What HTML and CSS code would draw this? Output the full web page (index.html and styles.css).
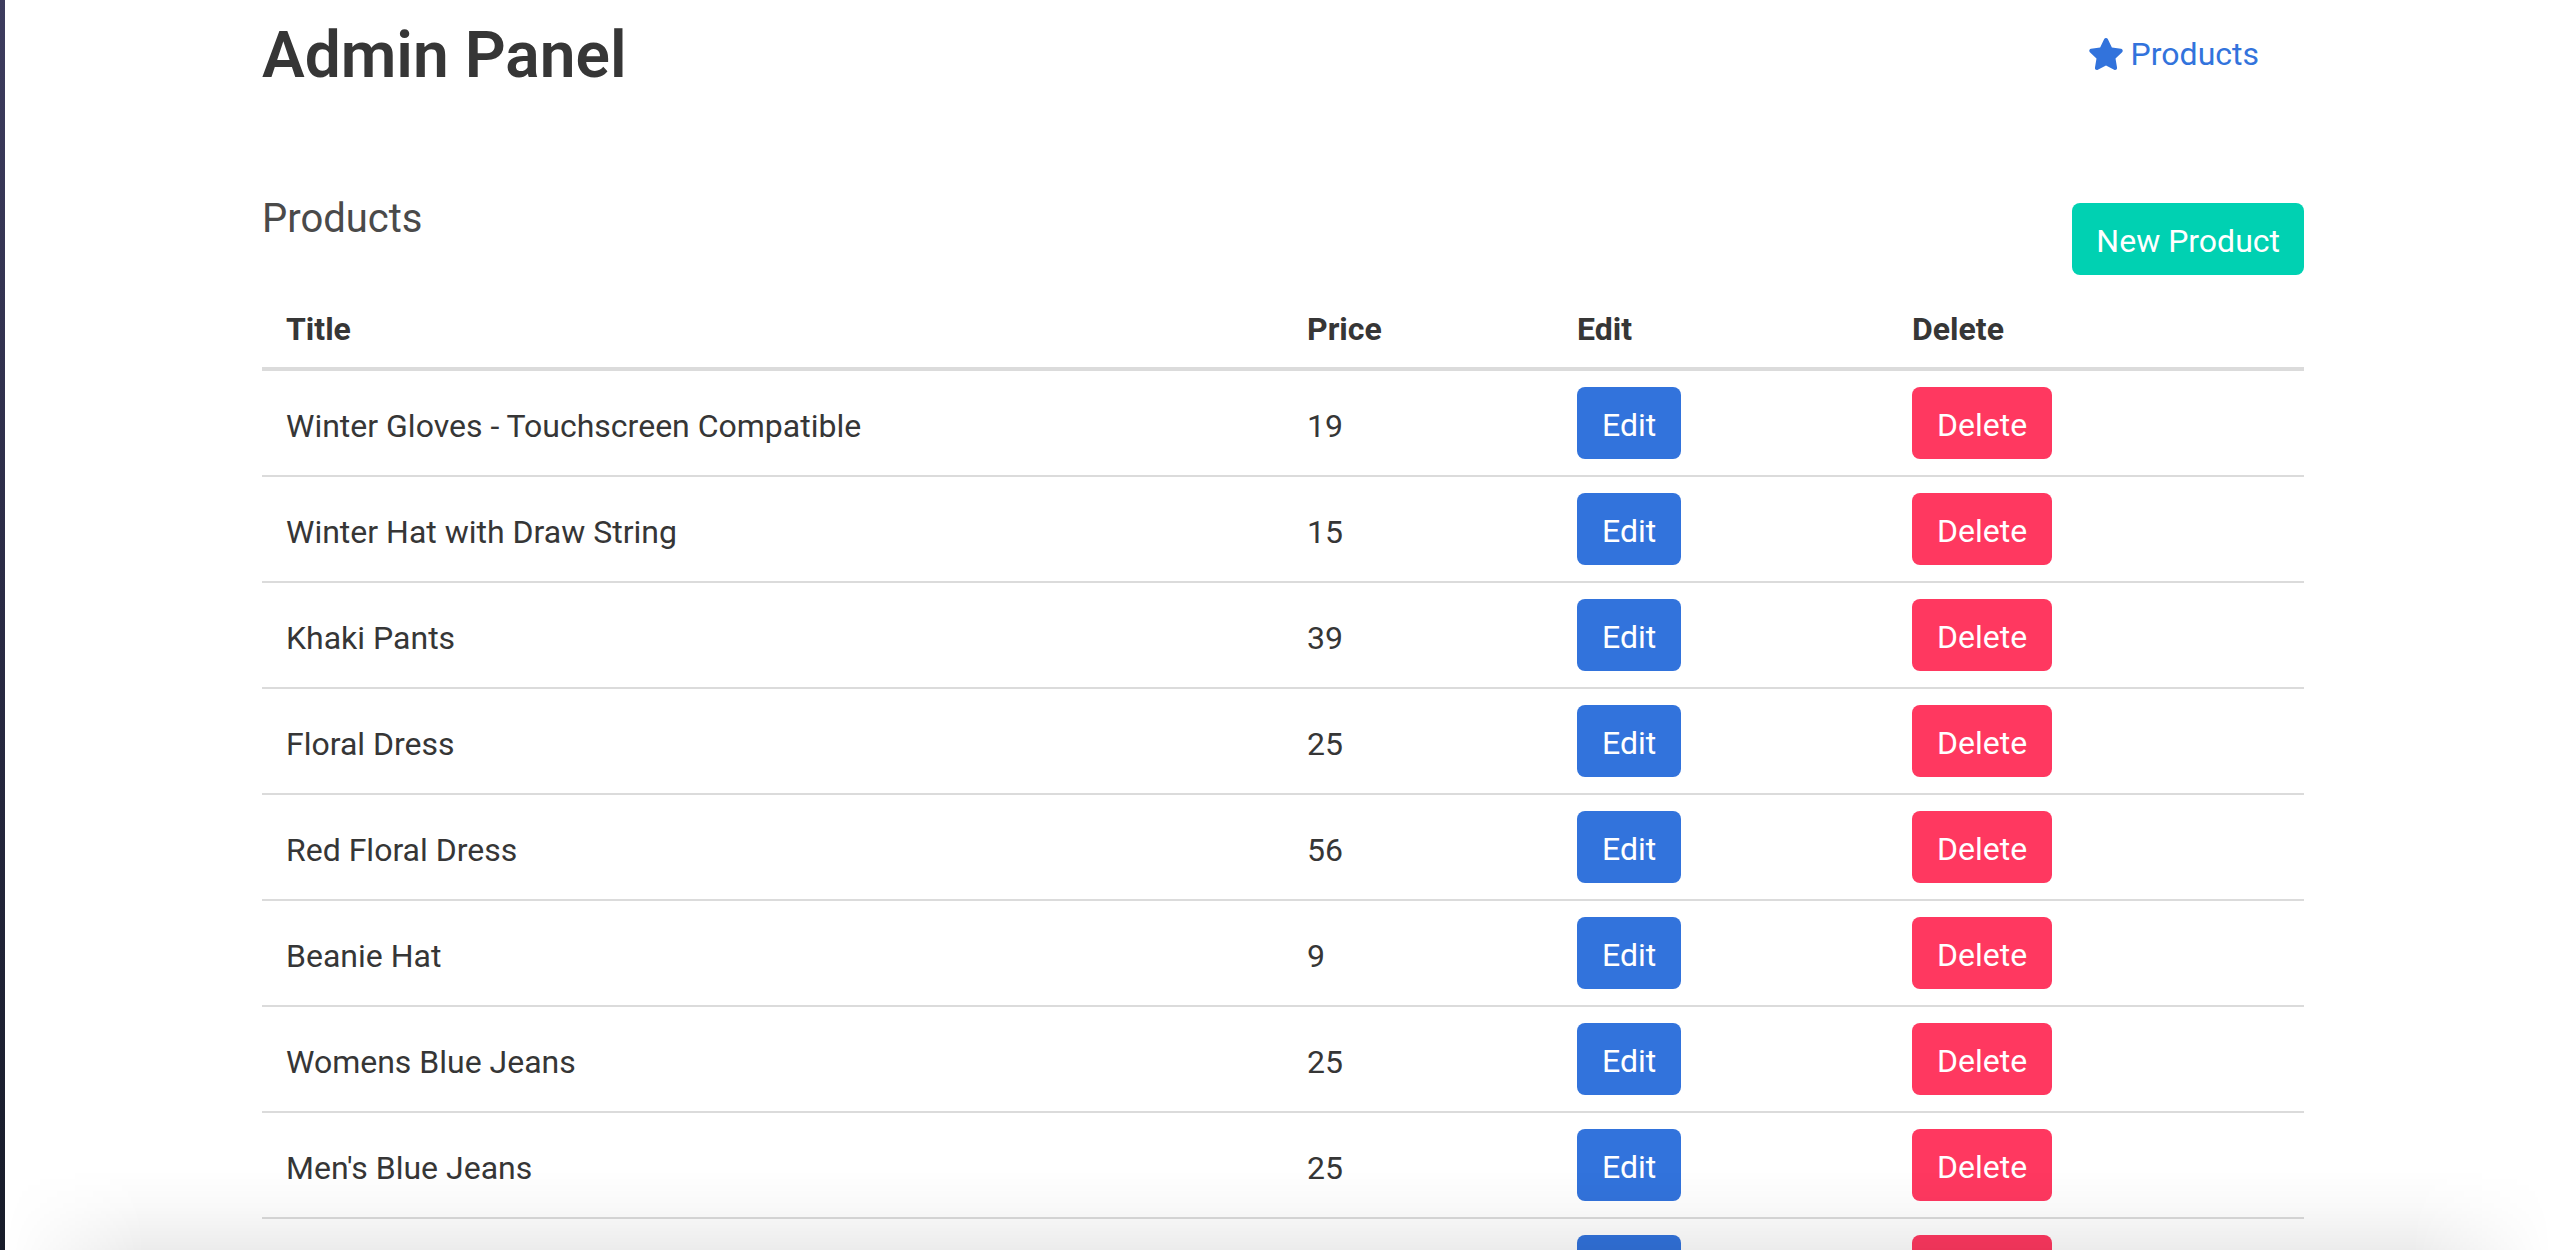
FILE: index.html
```html
<!DOCTYPE html>
<html lang="en">
<head>
<meta charset="utf-8">
<title>Admin Panel</title>
<link rel="stylesheet" href="styles.css">
</head>
<body>
<div class="desktop-edge"></div>
<div class="window">
  <div class="container">
    <header class="topbar">
      <h1 class="brand">Admin Panel</h1>
      <a class="nav-link" href="#">
        <svg class="star" viewBox="0 0 576 512" aria-hidden="true"><path d="M259.3 17.8L194 150.2 47.9 171.5c-26.2 3.8-36.7 36.1-17.7 54.6l105.7 103-25 145.5c-4.5 26.3 23.2 46 46.4 33.7L288 439.6l130.7 68.7c23.2 12.2 50.9-7.4 46.4-33.7l-25-145.5 105.7-103c19-18.5 8.5-50.8-17.7-54.6L382 150.2 316.7 17.8c-11.7-23.6-45.6-23.9-57.4 0z"/></svg>
        <span>Products</span>
      </a>
    </header>

    <div class="level">
      <h2 class="subtitle">Products</h2>
      <button class="btn btn-primary">New Product</button>
    </div>

    <table class="table">
      <thead>
        <tr>
          <th class="col-title">Title</th>
          <th class="col-price">Price</th>
          <th class="col-edit">Edit</th>
          <th class="col-delete">Delete</th>
        </tr>
      </thead>
      <tbody>
        <tr><td class="cell-text">Winter Gloves - Touchscreen Compatible</td><td class="cell-text">19</td><td><button class="btn btn-link">Edit</button></td><td><button class="btn btn-danger">Delete</button></td></tr>
        <tr><td class="cell-text">Winter Hat with Draw String</td><td class="cell-text">15</td><td><button class="btn btn-link">Edit</button></td><td><button class="btn btn-danger">Delete</button></td></tr>
        <tr><td class="cell-text">Khaki Pants</td><td class="cell-text">39</td><td><button class="btn btn-link">Edit</button></td><td><button class="btn btn-danger">Delete</button></td></tr>
        <tr><td class="cell-text">Floral Dress</td><td class="cell-text">25</td><td><button class="btn btn-link">Edit</button></td><td><button class="btn btn-danger">Delete</button></td></tr>
        <tr><td class="cell-text">Red Floral Dress</td><td class="cell-text">56</td><td><button class="btn btn-link">Edit</button></td><td><button class="btn btn-danger">Delete</button></td></tr>
        <tr><td class="cell-text">Beanie Hat</td><td class="cell-text">9</td><td><button class="btn btn-link">Edit</button></td><td><button class="btn btn-danger">Delete</button></td></tr>
        <tr><td class="cell-text">Womens Blue Jeans</td><td class="cell-text">25</td><td><button class="btn btn-link">Edit</button></td><td><button class="btn btn-danger">Delete</button></td></tr>
        <tr><td class="cell-text">Men's Blue Jeans</td><td class="cell-text">25</td><td><button class="btn btn-link">Edit</button></td><td><button class="btn btn-danger">Delete</button></td></tr>
        <tr><td class="cell-text">Wool Scarf</td><td class="cell-text">12</td><td><button class="btn btn-link">Edit</button></td><td><button class="btn btn-danger">Delete</button></td></tr>
      </tbody>
    </table>
  </div>
</div>
<div class="bottom-shade"></div>
</body>
</html>
```

FILE: styles.css
```css
html, body {
  margin: 0;
  padding: 0;
}

body {
  display: flex;
  min-height: 100vh;
  background: #ffffff;
  font-family: Roboto, Inter, "Noto Sans", "Liberation Sans", sans-serif;
  font-size: 32px;
  color: #363636;
  overflow: hidden;
}

.desktop-edge {
  flex: 0 0 5px;
  background: linear-gradient(to bottom, #3d3c5e 0%, #2a2b45 45%, #151a26 100%);
}

.window {
  flex: 1;
  background: #ffffff;
}

.container {
  width: 2042px;
  margin-left: 257px;
}

.topbar {
  display: flex;
  justify-content: space-between;
  align-items: flex-start;
  padding-top: 20px;
}

.brand {
  margin: 0;
  font-size: 64px;
  line-height: 72px;
  font-weight: 600;
  color: #363636;
}

.nav-link {
  display: flex;
  align-items: center;
  gap: 7px;
  margin-top: 10px;
  margin-right: 45px;
  line-height: 48px;
  color: #3273dc;
  text-decoration: none;
}

.star {
  width: 36px;
  height: 32px;
  fill: #3273dc;
}

.level {
  display: flex;
  justify-content: space-between;
  align-items: flex-start;
  margin-top: 102px;
}

.subtitle {
  margin: 0;
  font-size: 40px;
  line-height: 50px;
  font-weight: 400;
  color: #4a4a4a;
}

.btn {
  display: inline-flex;
  align-items: center;
  justify-content: center;
  box-sizing: border-box;
  height: 72px;
  padding: 4px 23px 0;
  border: 2px solid transparent;
  border-radius: 8px;
  font-family: inherit;
  font-size: 32px;
  line-height: 48px;
  color: #ffffff;
  cursor: pointer;
}

.level .btn {
  margin-top: 9px;
  padding-left: 22px;
  padding-right: 22px;
}

.btn-primary { background: #00d1b2; }
.btn-link { background: #3273dc; }
.btn-danger { background: #ff3860; }

.table {
  margin-top: 12px;
  width: 2042px;
  border-collapse: collapse;
  table-layout: fixed;
}

.col-title { width: 973px; }
.col-price { width: 222px; }
.col-edit { width: 287px; }
.col-delete { width: 368px; }

.table th {
  text-align: left;
  font-weight: 700;
  padding: 18px 24px 14px;
  line-height: 48px;
  border-bottom: 4px solid #dbdbdb;
  color: #363636;
}

.table td {
  padding: 16px 24px;
  line-height: 48px;
  vertical-align: middle;
  border-bottom: 2px solid #dbdbdb;
}

.table td.cell-text {
  padding-top: 19px;
  padding-bottom: 13px;
}

.table td .btn {
  vertical-align: middle;
}

.bottom-shade {
  position: fixed;
  left: 5px;
  right: 0;
  bottom: 0;
  height: 80px;
  pointer-events: none;
  background: linear-gradient(to bottom, rgba(0, 0, 0, 0) 0%, rgba(0, 0, 0, 0.025) 45%, rgba(0, 0, 0, 0.075) 100%);
  -webkit-mask-image: linear-gradient(to right, transparent 0, #000 140px, #000 calc(100% - 140px), transparent 100%);
  mask-image: linear-gradient(to right, transparent 0, #000 140px, #000 calc(100% - 140px), transparent 100%);
}
```
